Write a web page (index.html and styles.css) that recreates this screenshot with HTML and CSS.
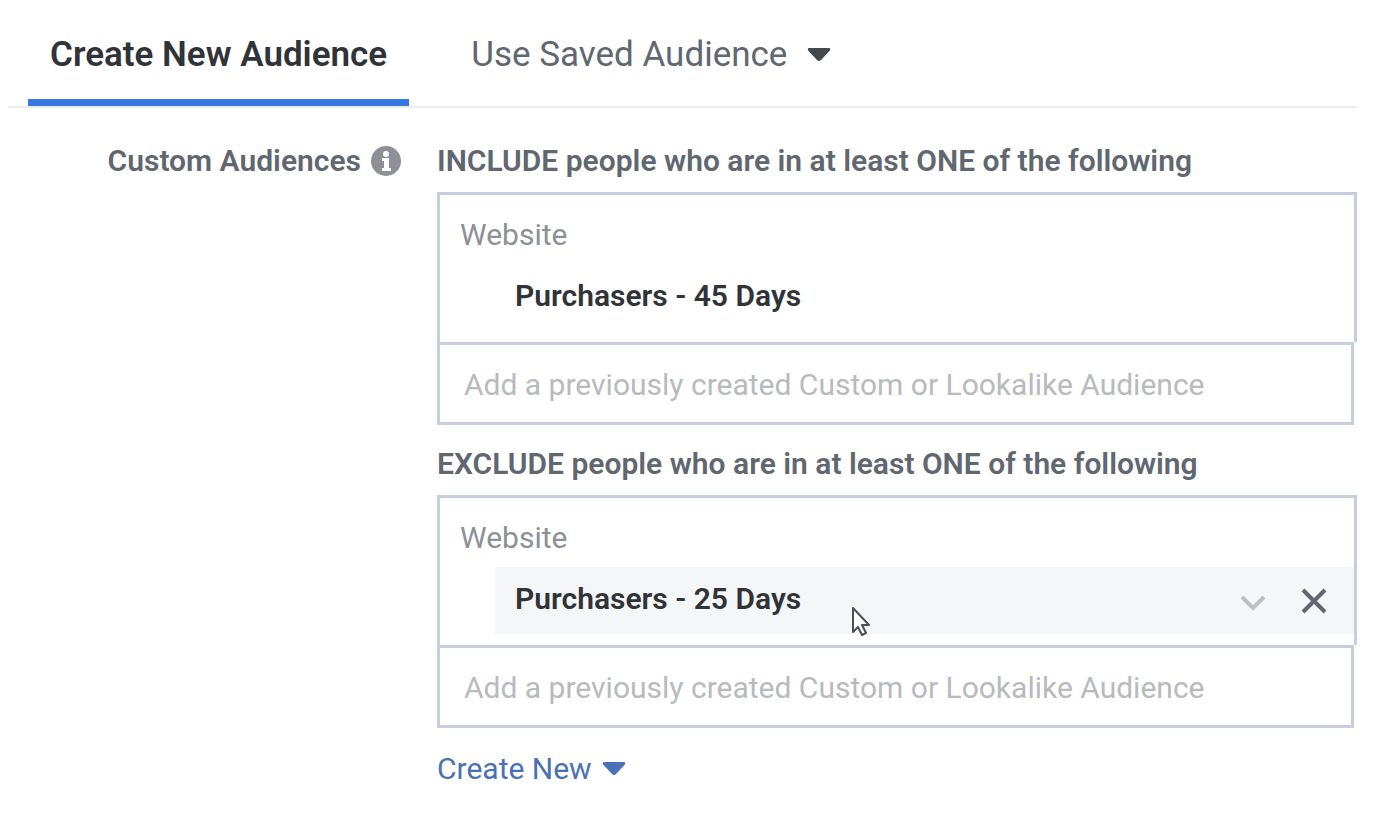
FILE: index.html
```html
<!DOCTYPE html>
<html lang="en">
<head>
    <meta charset="UTF-8">
    <meta name="viewport" content="width=device-width, initial-scale=1.0">
    <title>Create New Audience</title>
    <link rel="stylesheet" href="styles.css">
</head>
<body>

<div class="audience">
    <nav class="tabs">
        <button class="tab active" type="button">Create New Audience</button>
        <button class="tab" type="button">Use Saved Audience
            <svg class="caret" width="24" height="16" viewBox="0 0 24 16" aria-hidden="true"><path d="M2 1h20c1.500 0 1.500 2 .5 3l-8.500 9q-2 2-4 0L1.500 4C.5 3 .5 1 2 1z" fill="currentColor"/></svg>
        </button>
    </nav>

    <form class="fields">
        <div class="field-label">
            Custom Audiences
            <svg width="30" height="30" viewBox="0 0 30 30" aria-hidden="true"><circle cx="15" cy="15" r="15" fill="#8d9197"/><circle cx="15" cy="8" r="3" fill="#fff"/><path d="M11 12h7v10h2v3h-9v-3h2v-7h-2z" fill="#fff"/></svg>
        </div>

        <div class="field-content">
            <div class="group">
                <label class="group-title" for="include">INCLUDE people who are in at least ONE of the following</label>
                <div class="list">
                    <div class="source">Website</div>
                    <div class="item"><span class="name">Purchasers - 45 Days</span></div>
                </div>
                <input class="search" id="include" type="text" placeholder="Add a previously created Custom or Lookalike Audience">
            </div>

            <div class="group">
                <label class="group-title" for="exclude">EXCLUDE people who are in at least ONE of the following</label>
                <div class="list">
                    <div class="source">Website</div>
                    <div class="item hover">
                        <span class="name">Purchasers - 25 Days</span>
                        <button class="icon-button more" type="button" aria-label="More options">
                            <svg width="26" height="26" viewBox="0 0 26 26"><path d="M2 9l11 11L24 9" fill="none" stroke="currentColor" stroke-width="4"/></svg>
                        </button>
                        <button class="icon-button remove" type="button" aria-label="Remove">
                            <svg width="26" height="26" viewBox="0 0 26 26"><path d="M2 2l22 22M24 2L2 24" fill="none" stroke="currentColor" stroke-width="4"/></svg>
                        </button>
                        <svg class="cursor" width="20" height="30" viewBox="0 0 20 30" aria-hidden="true"><path d="M2 1v24l5-5 4 8 4-2-4-8h7z" fill="#fff" stroke="#4b4f56" stroke-width="2" stroke-linejoin="round"/></svg>
                    </div>
                </div>
                <input class="search" id="exclude" type="text" placeholder="Add a previously created Custom or Lookalike Audience">
            </div>

            <button class="create-new" type="button">Create New
                <svg class="caret" width="24" height="16" viewBox="0 0 24 16" aria-hidden="true"><path d="M2 1h20c1.500 0 1.500 2 .5 3l-8.500 9q-2 2-4 0L1.500 4C.5 3 .5 1 2 1z" fill="currentColor"/></svg>
            </button>
        </div>
    </form>
</div>

</body>
</html>
```

FILE: styles.css
```css
* {
    box-sizing: border-box;
}

body {
    margin: 0;
    background-color: #fff;
    color: #606770;
    font-family: Roboto, Arial, sans-serif;
    font-size: 30px;
    line-height: 38px;
}

button {
    padding: 0;
    border: none;
    background: none;
    color: inherit;
    font: inherit;
    cursor: pointer;
}

svg {
    display: block;
    flex: none;
}

.audience {
    padding: 0 43px 0 8px;
}

.tabs {
    display: flex;
    gap: 40px;
    padding-left: 20px;
    border-bottom: 2px solid #ebedf0;
}

.tab {
    display: flex;
    align-items: center;
    gap: 20px;
    padding: 33px 22px 22px;
    border-bottom: 7px solid transparent;
    font-size: 35px;
    line-height: 44px;
    white-space: nowrap;
}

.tab.active {
    border-bottom-color: #3578e5;
    color: #303338;
    font-weight: 600;
}

.tab .caret {
    color: #444950;
}

.fields {
    display: grid;
    grid-template-columns: 393px 1fr;
    gap: 36px;
    padding-top: 34px;
}

.field-label {
    display: flex;
    justify-content: flex-end;
    align-items: center;
    gap: 10px;
    height: 38px;
    font-weight: 600;
    white-space: nowrap;
}

.group {
    margin-bottom: 20px;
}

.group-title {
    display: block;
    margin-bottom: 12px;
    font-weight: 600;
}

.list {
    padding: 21px 0 11px;
    border: 3px solid #c5cde0;
    border-bottom: none;
}

.source {
    margin-bottom: 10px;
    padding-left: 20px;
    color: #8d9197;
}

.item {
    position: relative;
    display: flex;
    align-items: center;
    height: 67px;
    margin-left: 55px;
    padding: 0 27px 0 20px;
}

.item.hover {
    background-color: #f5f6f7;
}

.name {
    flex: 1;
    padding-bottom: 4px;
    color: #303338;
    font-weight: 600;
}

.icon-button {
    margin-left: 35px;
}

.more {
    color: #bec0c4;
}

.remove {
    color: #606770;
}

/* mouse pointer over the hovered row */
.cursor {
    position: absolute;
    top: 40px;
    left: 356px;
}

.search {
    display: block;
    width: calc(100% - 3px);
    height: 83px;
    padding: 2px 24px 0;
    border: 3px solid #c5cde0;
    border-radius: 0;
    background-color: #fff;
    color: #303338;
    font: inherit;
    outline: none;
}

.search::placeholder {
    color: #b8babd;
    opacity: 1;
}

.create-new {
    display: flex;
    align-items: center;
    gap: 10px;
    padding-top: 2px;
    color: #4a70b5;
}
```
